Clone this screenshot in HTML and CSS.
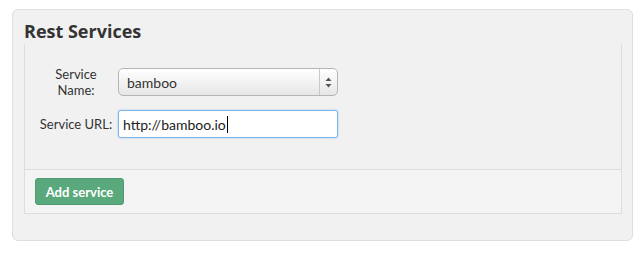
FILE: index.html
```html
<!DOCTYPE html>
<html>
<head>
<meta charset="utf-8">
<link rel="stylesheet" href="styles.css">
</head>
<body>
<div class="well">
  <h2 class="title">Rest Services</h2>
  <div class="panel">
    <div class="panel-body">
      <div class="row">
        <label class="label">Service Name:</label>
        <div class="select">
          <span class="select-text">bamboo</span>
          <span class="select-arrows">
            <svg width="7" height="11" viewBox="0 0 7 11"><path d="M3.5 0.5 L6.5 4 L0.5 4 Z M3.5 10.5 L6.5 7 L0.5 7 Z" fill="#555"/></svg>
          </span>
        </div>
      </div>
      <div class="row">
        <label class="label">Service URL:</label>
        <div class="input"><span>http://bamboo.io</span><span class="caret"></span></div>
      </div>
    </div>
    <div class="panel-footer">
      <button class="btn">Add service</button>
    </div>
  </div>
</div>
</body>
</html>
```

FILE: styles.css
```css
html, body {
  margin: 0;
  padding: 0;
  background: #ffffff;
  font-family: Lato, "Open Sans", sans-serif;
  color: #333333;
}
.well {
  box-sizing: border-box;
  margin: 9px 11px 0 12px;
  width: 621px;
  height: 232px;
  background: #f1f1f1;
  border: 1px solid #dedede;
  border-radius: 6px;
  padding: 0 10px 0 11px;
}
.title {
  margin: 0;
  padding-top: 9px;
  height: 34px;
  box-sizing: border-box;
  font-family: "Open Sans", Lato, sans-serif;
  font-size: 18px;
  line-height: 24px;
  font-weight: 700;
  color: #333333;
}
.panel {
  border: 1px solid #dddddd;
  border-top: none;
}
.panel-body {
  height: 125px;
  box-sizing: border-box;
  padding-top: 22px;
}
.row {
  display: flex;
  align-items: center;
  margin-bottom: 12px;
}
.label {
  width: 76px;
  margin-left: 13px;
  margin-right: 4px;
  text-align: center;
  font-size: 13px;
  line-height: 16px;
}
.select {
  box-sizing: border-box;
  width: 220px;
  height: 28px;
  border: 1px solid #b5b5b5;
  border-radius: 5px;
  background: linear-gradient(#ffffff, #e6e6e6);
  display: flex;
  align-items: center;
  justify-content: space-between;
}
.select-text {
  padding-left: 8px;
  font-size: 14px;
}
.select-arrows {
  width: 17px;
  height: 100%;
  border-left: 1px solid #c8c8c8;
  display: flex;
  align-items: center;
  justify-content: center;
}
.input {
  box-sizing: border-box;
  width: 220px;
  height: 28px;
  border: 1px solid #7fb6ea;
  border-radius: 3px;
  background: #ffffff;
  box-shadow: 0 0 2px rgba(100, 160, 230, 0.6);
  display: flex;
  align-items: center;
  padding-left: 4px;
  font-size: 14px;
  color: #222222;
}
.caret {
  display: inline-block;
  width: 1px;
  height: 17px;
  background: #000000;
  margin-left: 1px;
}
.panel-footer {
  border-top: 1px solid #dddddd;
  background: #f4f4f4;
  height: 44px;
  box-sizing: border-box;
  padding: 8px 10px;
}
.btn {
  box-sizing: border-box;
  height: 27px;
  width: 89px;
  border: 1px solid #4f9a70;
  border-radius: 3px;
  background: #5aa97c;
  color: #ffffff;
  font-family: Lato, sans-serif;
  font-weight: 700;
  font-size: 13px;
  padding: 0;
}
```
